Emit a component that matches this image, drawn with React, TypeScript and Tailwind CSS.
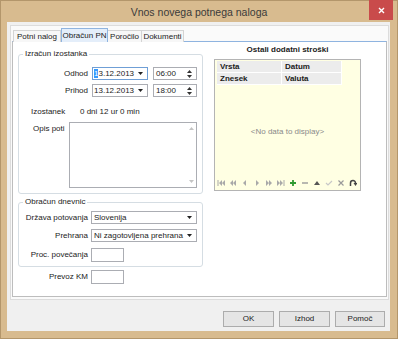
import React from "react";

const DownArrow = () => (
  <svg width="5" height="3" viewBox="0 0 5 3">
    <path d="M0 0h5L2.5 3z" fill="#222" />
  </svg>
);

const Spinner = () => (
  <div className="flex flex-col gap-[2px]">
    <svg width="5" height="3" viewBox="0 0 5 3">
      <path d="M0 3h5L2.5 0z" fill="#333" />
    </svg>
    <svg width="5" height="3" viewBox="0 0 5 3">
      <path d="M0 0h5L2.5 3z" fill="#333" />
    </svg>
  </div>
);

const DateBox = ({ focused }: { focused?: boolean }) => (
  <div
    className={`w-[56px] h-[13px] bg-white border flex items-center justify-between pl-[1px] pr-[4px] ${
      focused ? "border-[#6f9fd6]" : "border-[#abadb3]"
    }`}
  >
    <span>
      {focused ? <span className="bg-[#3399ff] text-white">1</span> : "1"}3.12.2013
    </span>
    <DownArrow />
  </div>
);

const TimeBox = ({ value }: { value: string }) => (
  <div className="w-[44px] h-[13px] bg-white border border-[#abadb3] flex items-center justify-between pl-[2px] pr-[4px]">
    <span>{value}</span>
    <Spinner />
  </div>
);

const Select = ({ value }: { value: string }) => (
  <div className="w-[106px] h-[13px] bg-white border border-[#abadb3] flex items-center justify-between pl-[2px] pr-[4px]">
    <span>{value}</span>
    <DownArrow />
  </div>
);

const Tool = ({ children }: { children: React.ReactNode }) => (
  <svg width="8" height="8" viewBox="0 0 8 8">
    {children}
  </svg>
);

const gray = "#a9a9a9";

export default function App() {
  return (
    <div className="w-[398px] h-[339px] flex flex-col bg-[#d8bb8f] border border-[#b3966b] font-['Liberation_Sans',Arial,sans-serif] text-[8px] leading-[10px] text-[#1b1b1b]">
      {/* Title bar */}
      <div className="relative h-[21px] flex items-center justify-center">
        <span className="text-[10.5px] leading-[12px] text-[#3a3a3a]">Vnos novega potnega naloga</span>
        <div className="absolute right-[4px] top-[-1px] w-[24px] h-[20px] bg-[#c94b4b] flex items-center justify-center">
          <svg width="7" height="7" viewBox="0 0 7 7">
            <path d="M1 1l5 5M6 1L1 6" stroke="#fff" strokeWidth="1.4" />
          </svg>
        </div>
      </div>

      {/* Client area */}
      <div className="flex-1 ml-[6px] mr-[7px] mb-[7px] bg-[#f0f0f0] flex flex-col">
        <div className="mt-[3px] ml-[3px] mr-[1px] h-[275px] border border-[#dcdcdc] bg-[#fafafa] px-[1px] pt-[1px] pb-[2px] flex flex-col">
          {/* Tabs */}
          <div className="h-[14px] flex items-end pl-[1px] relative z-10">
            <div className="w-[48px] h-[12px] -mb-px flex items-center justify-center border border-b-0 border-[#d4d4d4] bg-[#f7f7f7]">Potni nalog</div>
            <div className="w-[47px] h-[14px] -mb-px flex items-center justify-center border border-b-0 border-[#8fb4e0] bg-[#e4eefa]">Obračun PN</div>
            <div className="w-[34px] h-[12px] -mb-px flex items-center justify-center border border-b-0 border-l-0 border-[#d4d4d4] bg-[#f7f7f7]">Poročilo</div>
            <div className="w-[42px] h-[12px] -mb-px flex items-center justify-center border border-b-0 border-l-0 border-[#d4d4d4] bg-[#f7f7f7]">Dokumenti</div>
          </div>

          {/* Panel */}
          <div className="flex-1 border border-[#bdbdbd] border-t-[#8fb4e0] bg-white flex pl-[5px]">
            {/* Left column */}
            <div className="w-[185px] flex flex-col">
              <fieldset className="mt-[7px] h-[145px] border border-[#d5dde3] rounded-[3px]">
                <legend className="ml-[4px] px-[2px]">Izračun izostanka</legend>
                <div className="mt-[8px] h-[13px] flex items-center">
                  <span className="w-[69px] text-right">Odhod</span>
                  <div className="ml-[4px]">
                    <DateBox focused />
                  </div>
                  <div className="ml-[5px]">
                    <TimeBox value="06:00" />
                  </div>
                </div>
                <div className="mt-[4px] h-[13px] flex items-center">
                  <span className="w-[69px] text-right">Prihod</span>
                  <div className="ml-[4px]">
                    <DateBox />
                  </div>
                  <div className="ml-[5px]">
                    <TimeBox value="18:00" />
                  </div>
                </div>
                <div className="mt-[10px] flex pl-[12px]">
                  <span className="w-[49px]">Izostanek</span>
                  <span>0 dni 12 ur 0 min</span>
                </div>
                <div className="mt-[5px] flex items-start">
                  <span className="w-[50px] pl-[14px] mt-[2px]">Opis poti</span>
                  <div className="w-[128px] h-[66px] border border-[#abadb3] bg-white flex justify-end">
                    <div className="w-[9px] flex flex-col items-center justify-between py-[4px]">
                      <svg width="5" height="3" viewBox="0 0 5 3">
                        <path d="M0 3h5L2.5 0z" fill="#c4c4c4" />
                      </svg>
                      <svg width="5" height="3" viewBox="0 0 5 3">
                        <path d="M0 0h5L2.5 3z" fill="#c4c4c4" />
                      </svg>
                    </div>
                  </div>
                </div>
              </fieldset>

              <fieldset className="mt-[3px] h-[70px] border border-[#d5dde3] rounded-[3px]">
                <legend className="ml-[4px] px-[2px]">Obračun dnevnic</legend>
                <div className="mt-[4px] h-[13px] flex items-center">
                  <span className="w-[69px] text-right">Država potovanja</span>
                  <div className="ml-[3px]">
                    <Select value="Slovenija" />
                  </div>
                </div>
                <div className="mt-[5px] h-[13px] flex items-center">
                  <span className="w-[69px] text-right">Prehrana</span>
                  <div className="ml-[3px]">
                    <Select value="Ni zagotovljena prehrana" />
                  </div>
                </div>
                <div className="mt-[6px] h-[14px] flex items-center">
                  <span className="w-[69px] text-right">Proc. povečanja</span>
                  <div className="ml-[3px] w-[33px] h-[14px] border border-[#abadb3] bg-white" />
                </div>
              </fieldset>

              <div className="mt-[3px] h-[14px] flex items-center">
                <span className="w-[70px] text-right">Prevoz KM</span>
                <div className="ml-[3px] w-[33px] h-[14px] border border-[#abadb3] bg-white" />
              </div>
            </div>

            {/* Right column */}
            <div className="ml-[11px] w-[147px] pt-[3px] flex flex-col">
              <div className="text-center font-bold">Ostali dodatni stroški</div>
              <div className="mt-[4px] h-[132px] border border-[#b4b4b4] bg-[#ffffe3] flex flex-col">
                <div className="ml-[2px] mt-[1px] grid grid-cols-[65px_60px] font-bold">
                  <div className="h-[12px] bg-[#ececec] border-r border-b border-white pl-[3px] flex items-center">Vrsta</div>
                  <div className="h-[12px] bg-[#ececec] border-r border-b border-white pl-[3px] flex items-center">Datum</div>
                  <div className="h-[12px] bg-[#ececec] border-r border-b border-white pl-[3px] flex items-center">Znesek</div>
                  <div className="h-[12px] bg-[#ececec] border-r border-b border-white pl-[3px] flex items-center">Valuta</div>
                </div>
                <div className="flex-1 flex items-center justify-center text-[#8a8a8a]">&lt;No data to display&gt;</div>
                <div className="h-[10px] mb-[2px] ml-[2px] flex items-center gap-[4px]">
                  <Tool>
                    <path d="M1 1v6" stroke={gray} />
                    <path d="M5 1L2 4l3 3z M8 1L5 4l3 3z" fill={gray} />
                  </Tool>
                  <Tool>
                    <path d="M4 1L1 4l3 3z M7 1L4 4l3 3z" fill={gray} />
                  </Tool>
                  <Tool>
                    <path d="M5 1L2 4l3 3z" fill={gray} />
                  </Tool>
                  <Tool>
                    <path d="M3 1l3 3-3 3z" fill={gray} />
                  </Tool>
                  <Tool>
                    <path d="M1 1l3 3-3 3z M4 1l3 3-3 3z" fill={gray} />
                  </Tool>
                  <Tool>
                    <path d="M0 1l3 3-3 3z M3 1l3 3-3 3z" fill={gray} />
                    <path d="M7 1v6" stroke={gray} />
                  </Tool>
                  <Tool>
                    <path d="M4 1v6M1 4h6" stroke="#2f9a2f" strokeWidth="1.8" />
                  </Tool>
                  <Tool>
                    <path d="M1 4h6" stroke="#9a9a9a" strokeWidth="1.4" />
                  </Tool>
                  <Tool>
                    <path d="M1 6h6L4 2z" fill="#555" />
                  </Tool>
                  <Tool>
                    <path d="M1 4l2 2 4-4" stroke="#c8c8c8" strokeWidth="1.2" fill="none" />
                  </Tool>
                  <Tool>
                    <path d="M1.5 1.5l5 5M6.5 1.5l-5 5" stroke="#9a9a9a" strokeWidth="1.2" />
                  </Tool>
                  <Tool>
                    <path d="M1.5 7V4a2.5 2.5 0 0 1 5 0" stroke="#444" strokeWidth="1.5" fill="none" />
                    <path d="M4.5 4h4L6.5 7z" fill="#444" />
                  </Tool>
                </div>
              </div>
            </div>
          </div>
        </div>

        {/* Buttons */}
        <div className="mt-[11px] flex justify-end gap-[5px] pr-[5px]">
          <button className="w-[51px] h-[16px] border border-[#acacac] bg-[#e5e5e5]">OK</button>
          <button className="w-[51px] h-[16px] border border-[#acacac] bg-[#e5e5e5]">Izhod</button>
          <button className="w-[50px] h-[16px] border border-[#acacac] bg-[#e5e5e5]">Pomoč</button>
        </div>
      </div>
    </div>
  );
}
